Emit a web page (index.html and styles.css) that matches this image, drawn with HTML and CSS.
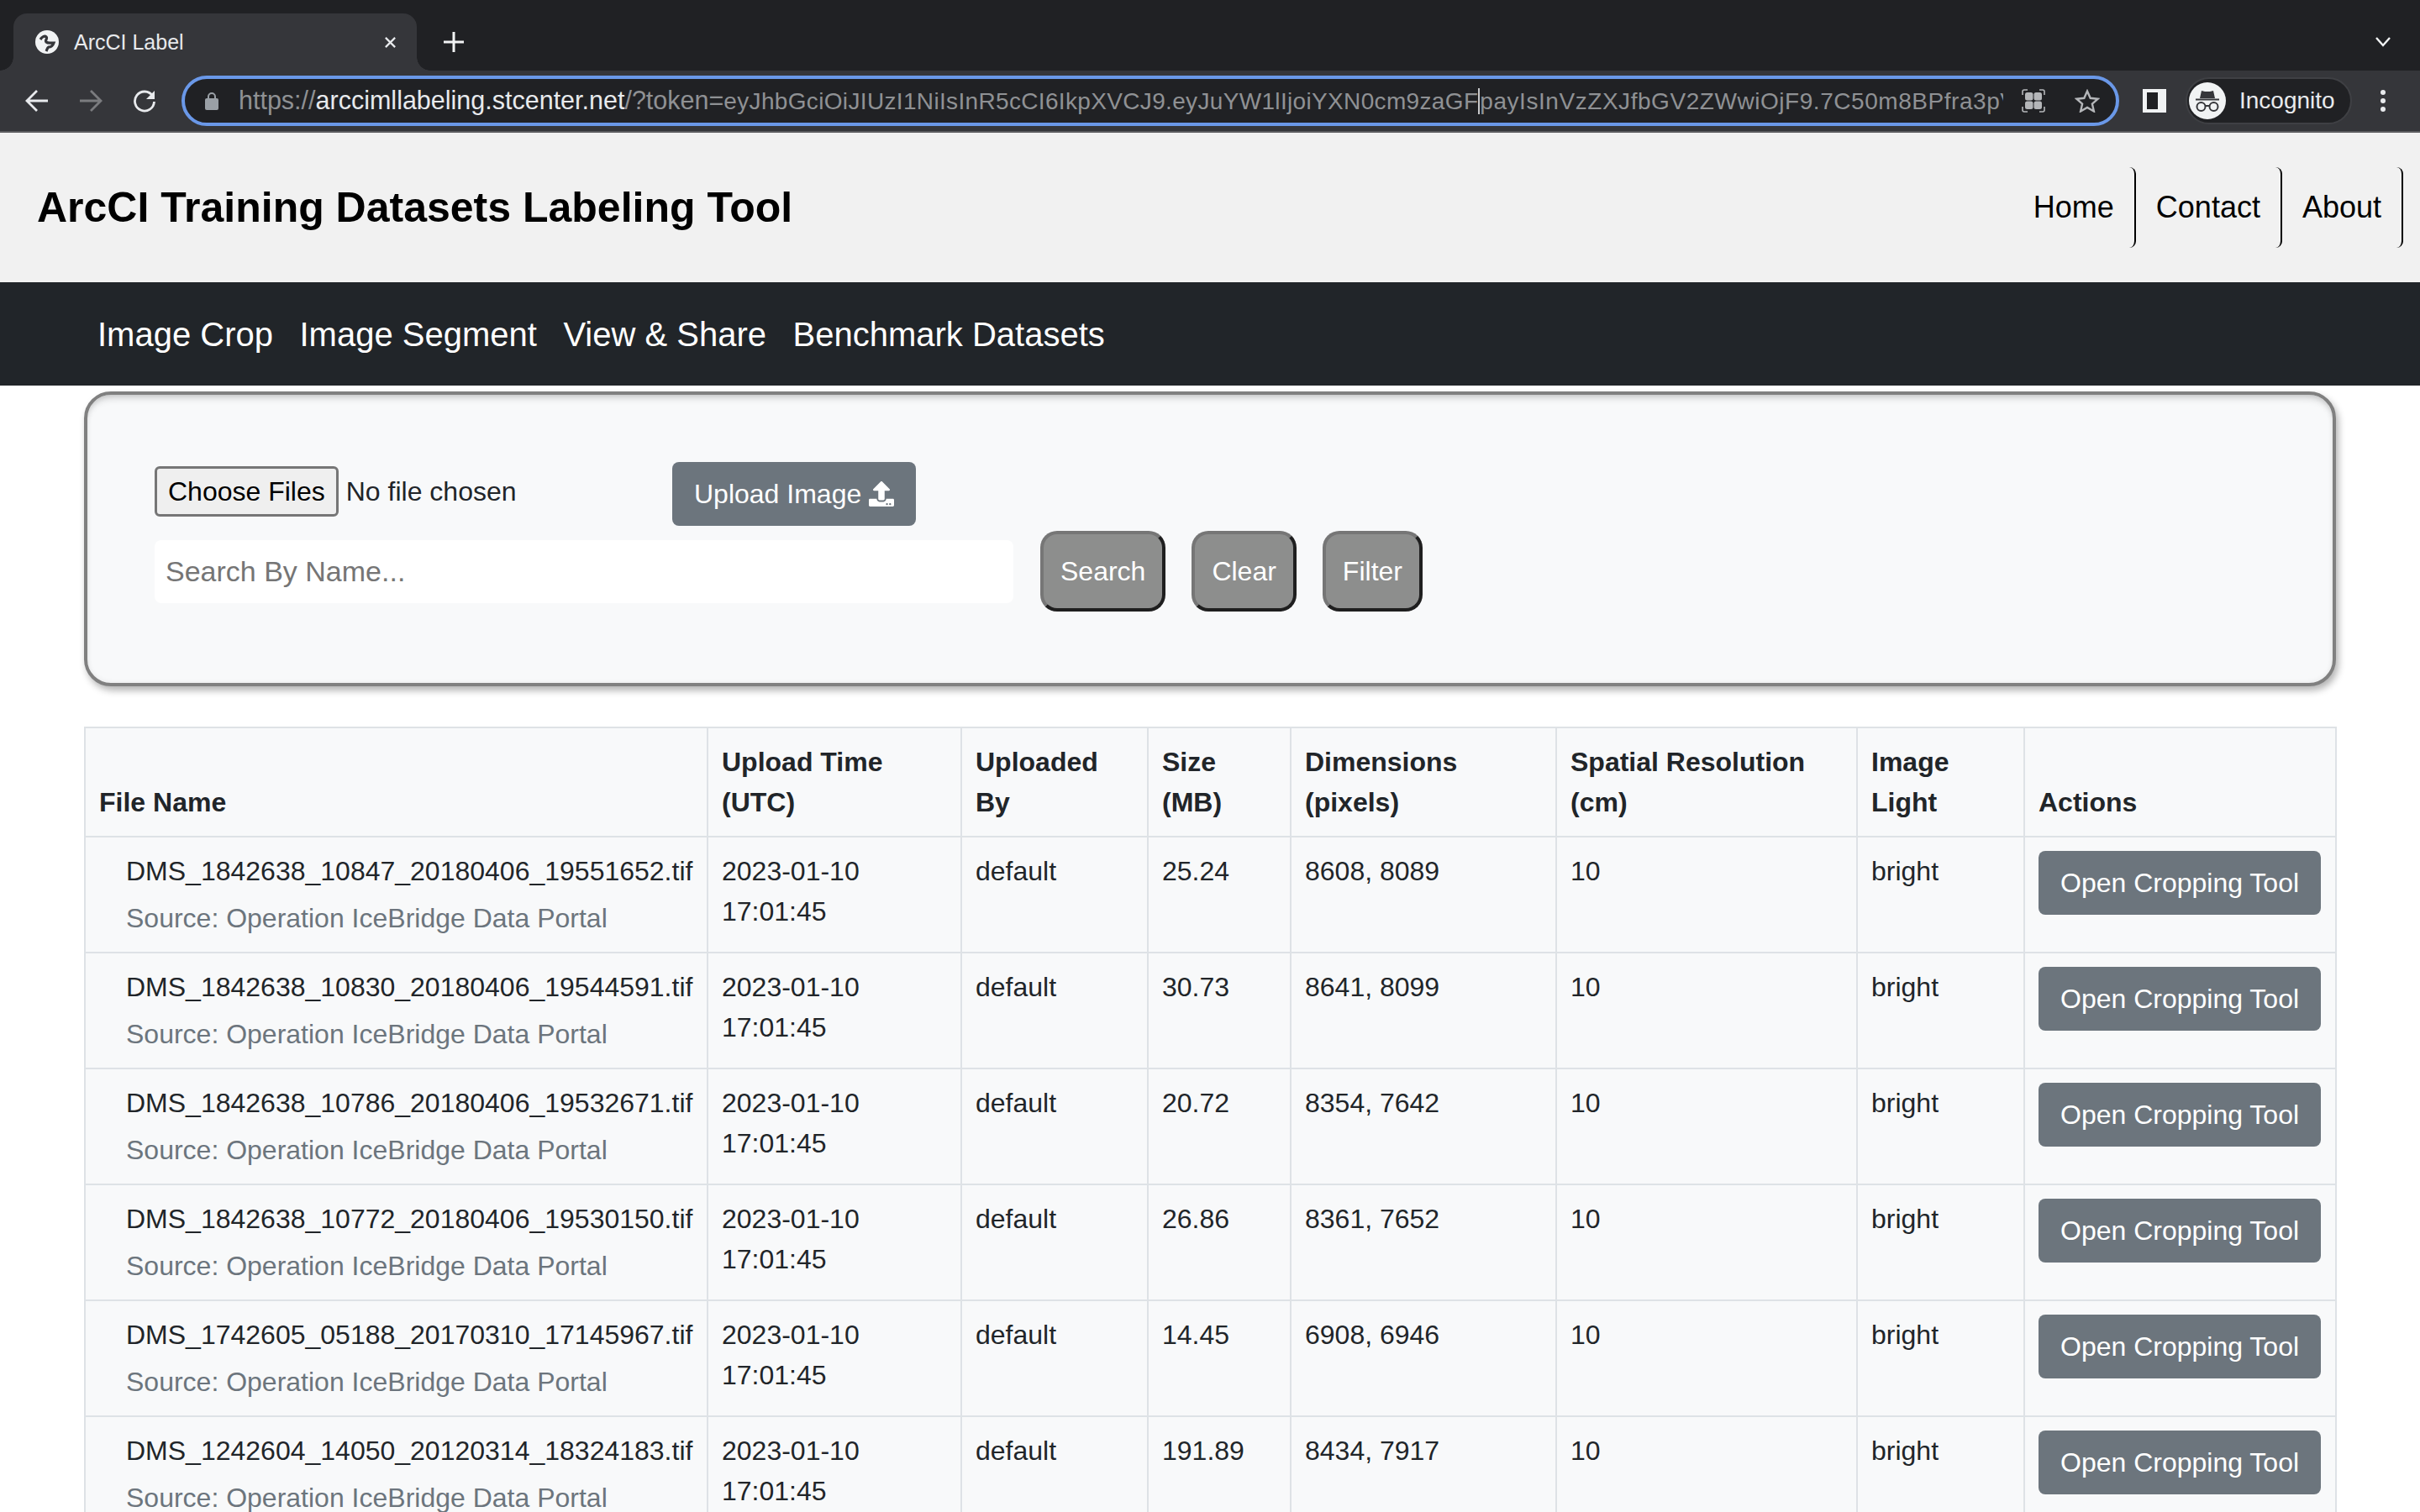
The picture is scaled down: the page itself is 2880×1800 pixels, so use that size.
FILE: index.html
```html
<!DOCTYPE html>
<html lang="en">
<head>
    <meta charset="UTF-8" />
    <title>ArcCI Label</title>
    <link rel="stylesheet" href="styles.css">
</head>
<body>
    <div class="tabstrip">
        <div class="tab">
            <svg class="favicon" viewBox="0 0 28 28">
                <circle cx="14" cy="14" r="14" fill="#f1f3f4"/>
                <path d="M6 11c2-3 5-5 7-3 2 2-2 4 0 6 2 2 5 1 9 1-1 3-3 5-6 5-2 1-2 3-3 5" fill="none" stroke="#35363a" stroke-width="3.200"/>
            </svg>
            <span class="tab-title">ArcCI Label</span>
            <svg class="tab-close" viewBox="0 0 16 16"><path d="M2 2l12 12M14 2L2 14" stroke="#e8eaed" stroke-width="2.400"/></svg>
        </div>
        <svg class="new-tab" viewBox="0 0 24 24"><path d="M12 0v24M0 12h24" stroke="#f1f3f4" stroke-width="3"/></svg>
        <svg class="tab-list" viewBox="0 0 18 12"><path d="M1 1l8 9 8-9" fill="none" stroke="#f1f3f4" stroke-width="2.400"/></svg>
    </div>

    <div class="toolbar">
        <svg class="tool-icon" viewBox="0 0 28 28"><path d="M27 14H3M14 2L2 14l12 12" fill="none" stroke="#e8eaed" stroke-width="2.800"/></svg>
        <svg class="tool-icon" viewBox="0 0 28 28"><path d="M1 14h24M14 2l12 12-12 12" fill="none" stroke="#7b7c7f" stroke-width="2.800"/></svg>
        <svg class="tool-icon" viewBox="0 0 28 28"><path d="M23.500 8A11.500 11.500 0 1 0 25.500 15" fill="none" stroke="#e8eaed" stroke-width="2.800"/><path d="M26 2v10H16z" fill="#e8eaed"/></svg>
        <div class="omnibox">
            <svg class="lock" viewBox="0 0 16 22"><path d="M4 9V6a4 4 0 0 1 8 0v3" fill="none" stroke="#9aa0a6" stroke-width="2"/><rect y="8" width="16" height="14" rx="2" fill="#9aa0a6"/></svg>
            <div class="url"><span class="url-head"><span class="dim">https://</span>arccimllabeling.stcenter.net<span class="dim">/?token=</span></span><span class="dim token">eyJhbGciOiJIUzI1NiIsInR5cCI6IkpXVCJ9.eyJuYW1lIjoiYXN0cm9zaGF</span><span class="dim caret">payIsInVzZXJfbGV2ZWwiOjF9.7C50m8BPfra3pV</span></div>
            <svg class="qr" viewBox="0 0 28 28">
                <path d="M1 7V3a2 2 0 0 1 2-2h4M21 1h4a2 2 0 0 1 2 2v4M27 21v4a2 2 0 0 1-2 2h-4M7 27H3a2 2 0 0 1-2-2v-4" fill="none" stroke="#b4b6b9" stroke-width="1.600"/>
                <rect x="4" y="4" width="9.500" height="9.500" rx="2.500" fill="#b4b6b9"/><rect x="14.500" y="4" width="9.500" height="9.500" rx="2.500" fill="#b4b6b9"/>
                <rect x="4" y="14.500" width="9.500" height="9.500" rx="2.500" fill="#b4b6b9"/><rect x="14.500" y="14.500" width="9.500" height="9.500" rx="2.500" fill="#b4b6b9"/>
            </svg>
            <svg class="star" viewBox="0 0 30 28"><path d="M15 2.500l3.700 8.300 9 .9-6.800 6 2 8.800L15 22l-7.900 4.500 2-8.800-6.800-6 9-.9z" fill="none" stroke="#b4b6b9" stroke-width="2.400"/></svg>
        </div>
        <svg class="side-panel" viewBox="0 0 28 28"><path d="M0 0h28v28H0z" fill="#f1f3f4"/><path d="M5 4h13v20H5z" fill="#202124"/></svg>
        <div class="profile">
            <svg class="avatar" viewBox="0 0 44 44">
                <circle cx="22" cy="22" r="22" fill="#f1f3f4"/>
                <path d="M13 19l2-9 4 1h6l4-1 2 9z" fill="#35363a"/>
                <path d="M8 20.500h28" stroke="#35363a" stroke-width="2"/>
                <circle cx="14.500" cy="29" r="5" fill="none" stroke="#35363a" stroke-width="2"/>
                <circle cx="29.500" cy="29" r="5" fill="none" stroke="#35363a" stroke-width="2"/>
                <path d="M19.500 28h5" stroke="#35363a" stroke-width="2"/>
            </svg>
            <span class="profile-name">Incognito</span>
        </div>
        <svg class="kebab" viewBox="0 0 6 26"><circle cx="3" cy="3" r="3" fill="#e8eaed"/><circle cx="3" cy="13" r="3" fill="#e8eaed"/><circle cx="3" cy="23" r="3" fill="#e8eaed"/></svg>
    </div>

    <div class="site-header">
        <h1 class="site-title">ArcCI Training Datasets Labeling Tool</h1>
        <div class="site-links">
            <a class="site-link">Home</a>
            <a class="site-link">Contact</a>
            <a class="site-link">About</a>
        </div>
    </div>
    <div class="main-nav">
        <a>Image Crop</a>
        <a>Image Segment</a>
        <a>View &amp; Share</a>
        <a>Benchmark Datasets</a>
    </div>

    <div class="content">
        <div class="panel">
            <div class="upload-row">
                <input class="file-input" type="file" multiple>
                <button class="btn">Upload Image
                    <svg class="upload-icon" viewBox="0 0 512 512"><path fill="#fff" d="M296 384h-80c-13.300 0-24-10.700-24-24V192h-87.700c-17.800 0-26.700-21.500-14.100-34.100L242.300 5.700c7.500-7.500 19.800-7.500 27.300 0l152.200 152.200c12.600 12.600 3.700 34.100-14.100 34.100H320v168c0 13.300-10.700 24-24 24zm216-8v112c0 13.300-10.700 24-24 24H24c-13.300 0-24-10.700-24-24V376c0-13.300 10.700-24 24-24h136v8c0 30.900 25.100 56 56 56h80c30.900 0 56-25.100 56-56v-8h136c13.300 0 24 10.700 24 24zm-124 88c0-11-9-20-20-20s-20 9-20 20 9 20 20 20 20-9 20-20zm64 0c0-11-9-20-20-20s-20 9-20 20 9 20 20 20 20-9 20-20z"/></svg>
                </button>
            </div>
            <div class="search-row">
                <input class="search-input" type="text" placeholder="Search By Name...">
                <button class="btn-old">Search</button>
                <button class="btn-old">Clear</button>
                <button class="btn-old">Filter</button>
            </div>
        </div>

        <table class="files">
            <colgroup>
                <col class="col-name"><col class="col-time"><col class="col-by"><col class="col-size">
                <col class="col-dim"><col class="col-res"><col class="col-light"><col class="col-act">
            </colgroup>
            <thead>
                <tr>
                    <th>File Name</th><th>Upload Time (UTC)</th><th>Uploaded By</th><th>Size (MB)</th>
                    <th>Dimensions (pixels)</th><th>Spatial Resolution (cm)</th><th>Image Light</th><th>Actions</th>
                </tr>
            </thead>
            <tbody>
                <tr>
                    <td class="name-cell"><p class="file-name">DMS_1842638_10847_20180406_19551652.tif</p><p class="source">Source: Operation IceBridge Data Portal</p></td>
                    <td>2023-01-10 17:01:45</td><td>default</td><td>25.24</td><td>8608, 8089</td><td>10</td><td>bright</td><td><button class="btn">Open Cropping Tool</button></td>
                </tr>
                <tr>
                    <td class="name-cell"><p class="file-name">DMS_1842638_10830_20180406_19544591.tif</p><p class="source">Source: Operation IceBridge Data Portal</p></td>
                    <td>2023-01-10 17:01:45</td><td>default</td><td>30.73</td><td>8641, 8099</td><td>10</td><td>bright</td><td><button class="btn">Open Cropping Tool</button></td>
                </tr>
                <tr>
                    <td class="name-cell"><p class="file-name">DMS_1842638_10786_20180406_19532671.tif</p><p class="source">Source: Operation IceBridge Data Portal</p></td>
                    <td>2023-01-10 17:01:45</td><td>default</td><td>20.72</td><td>8354, 7642</td><td>10</td><td>bright</td><td><button class="btn">Open Cropping Tool</button></td>
                </tr>
                <tr>
                    <td class="name-cell"><p class="file-name">DMS_1842638_10772_20180406_19530150.tif</p><p class="source">Source: Operation IceBridge Data Portal</p></td>
                    <td>2023-01-10 17:01:45</td><td>default</td><td>26.86</td><td>8361, 7652</td><td>10</td><td>bright</td><td><button class="btn">Open Cropping Tool</button></td>
                </tr>
                <tr>
                    <td class="name-cell"><p class="file-name">DMS_1742605_05188_20170310_17145967.tif</p><p class="source">Source: Operation IceBridge Data Portal</p></td>
                    <td>2023-01-10 17:01:45</td><td>default</td><td>14.45</td><td>6908, 6946</td><td>10</td><td>bright</td><td><button class="btn">Open Cropping Tool</button></td>
                </tr>
                <tr>
                    <td class="name-cell"><p class="file-name">DMS_1242604_14050_20120314_18324183.tif</p><p class="source">Source: Operation IceBridge Data Portal</p></td>
                    <td>2023-01-10 17:01:45</td><td>default</td><td>191.89</td><td>8434, 7917</td><td>10</td><td>bright</td><td><button class="btn">Open Cropping Tool</button></td>
                </tr>
            </tbody>
        </table>
    </div>
</body>
</html>
```

FILE: styles.css
```css
html, body {
    height: 1800px;
    overflow: hidden;
}
body {
    margin: 0;
    background: #fff;
    color: #212529;
    font-family: "Liberation Sans", Arial, sans-serif;
    font-size: 32px;
    line-height: 48px;
}

/* browser chrome */
.tabstrip {
    display: flex;
    align-items: flex-end;
    height: 84px;
    padding-left: 16px;
    background: #202124;
}
.tab {
    position: relative;
    display: flex;
    align-items: center;
    width: 480px;
    height: 68px;
    padding: 0 24px 0 26px;
    box-sizing: border-box;
    background: #35363a;
    border-radius: 16px 16px 0 0;
}
.tab::before, .tab::after {
    content: "";
    position: absolute;
    bottom: 0;
    width: 16px;
    height: 16px;
}
.tab::before {
    left: -16px;
    background: radial-gradient(circle at 0 0, #202124 15.500px, #35363a 16px);
}
.tab::after {
    right: -16px;
    background: radial-gradient(circle at 100% 0, #202124 15.500px, #35363a 16px);
}
.favicon {
    width: 28px;
    height: 28px;
    margin-right: 18px;
}
.tab-title {
    flex: 1;
    color: #e8eaed;
    font-size: 25px;
}
.tab-close {
    width: 15px;
    height: 15px;
}
.new-tab {
    width: 24px;
    height: 24px;
    margin: 0 0 22px 32px;
}
.tab-list {
    width: 18px;
    height: 12px;
    margin: 0 35px 28px auto;
}
.toolbar {
    display: flex;
    align-items: center;
    height: 72px;
    padding-left: 30px;
    background: #35363a;
    border-bottom: 2px solid #5b5c5f;
}
.tool-icon {
    width: 28px;
    height: 28px;
    margin-right: 36px;
}
.tool-icon:nth-child(3) {
    margin-right: 30px;
}
.omnibox {
    display: flex;
    align-items: center;
    width: 2306px;
    height: 60px;
    box-sizing: border-box;
    padding-left: 24px;
    background: #202124;
    border: 4px solid #6a98e8;
    border-radius: 30px;
}
.lock {
    width: 16px;
    height: 22px;
    margin-right: 24px;
    flex: none;
}
.url {
    width: 2100px;
    flex: none;
    overflow: hidden;
    white-space: nowrap;
    color: #e8eaed;
    font-size: 28px;
    line-height: 40px;
}
.url-head {
    font-size: 30.500px;
}
.dim {
    color: #8f9194;
}
.token {
    letter-spacing: .34px;
}
.caret {
    letter-spacing: .55px;
    border-left: 2px solid #c8c9cb;
}
.qr {
    width: 28px;
    height: 28px;
    margin-left: 22px;
    flex: none;
}
.star {
    width: 30px;
    height: 28px;
    margin-left: 35px;
    flex: none;
}
.side-panel {
    width: 28px;
    height: 28px;
    margin-left: 28px;
}
.profile {
    display: flex;
    align-items: center;
    width: 198px;
    height: 56px;
    margin-left: 23px;
    padding-left: 2px;
    box-sizing: border-box;
    background: #202124;
    border: 2px solid #3f4044;
    border-radius: 28px;
}
.avatar {
    width: 44px;
    height: 44px;
}
.profile-name {
    margin-left: 16px;
    color: #e8eaed;
    font-size: 28px;
}
.kebab {
    width: 6px;
    height: 26px;
    margin-left: 34px;
}

/* site header */
.site-header {
    display: flex;
    align-items: center;
    justify-content: space-between;
    height: 178px;
    padding: 0 20px 0 44px;
    background: #f1f1f1;
}
.site-title {
    margin: 0;
    color: #000;
    font-size: 50px;
    line-height: 60px;
    font-weight: bold;
}
.site-links {
    display: flex;
}
.site-link {
    padding: 21px 24px;
    color: #000;
    font-size: 36px;
    line-height: 54px;
    border-right: 2px solid #000;
    border-radius: 8px;
}
.main-nav {
    display: flex;
    gap: 31.500px;
    height: 123px;
    padding-left: 116px;
    align-items: center;
    background: #212529;
    color: #fff;
    font-size: 40px;
}

/* page content */
.content {
    padding: 7px 100px 0;
}
.panel {
    height: 351px;
    box-sizing: border-box;
    padding: 80px 79px 0 80px;
    background: #f8f9fa;
    border: 4px solid #808080;
    border-radius: 32px;
    box-shadow: 3px 5px 8px rgba(0, 0, 0, .3), inset 0 8px 10px -5px rgba(0, 0, 0, .2), inset 0 0 6px rgba(0, 0, 0, .08);
}
.upload-row {
    display: flex;
    align-items: flex-start;
}
.file-input {
    width: 616px;
    margin-top: 5px;
    font-family: inherit;
    font-size: 32px;
    color: #212529;
}
.file-input::file-selector-button {
    height: 60px;
    margin-right: 9px;
    padding: 0 13px;
    font-family: inherit;
    font-size: 32px;
    background: #efefef;
    color: #000;
    border: 3px solid #767676;
    border-radius: 6px;
}
.btn {
    display: inline-flex;
    align-items: center;
    padding: 14px 26px;
    font-family: inherit;
    font-size: 32px;
    line-height: 48px;
    color: #fff;
    background: #6c757d;
    border: 0;
    border-radius: 8px;
}
.upload-icon {
    width: 30px;
    height: 30px;
    margin-left: 9px;
}
.search-row {
    display: flex;
    align-items: center;
    gap: 31px;
    margin-top: 6px;
}
.search-input {
    width: 1022px;
    height: 75px;
    margin-right: 1px;
    box-sizing: border-box;
    padding: 0 13px;
    font-family: inherit;
    font-size: 34px;
    background: #fff;
    border: 0;
    border-radius: 8px;
}
.search-input::placeholder {
    color: #757575;
}
.btn-old {
    height: 96px;
    padding: 0 20px;
    font-family: inherit;
    font-size: 32px;
    color: #fff;
    background: #8d8e8d;
    border: 4px solid;
    border-color: #767676 #1f1f1f #1f1f1f #767676;
    border-radius: 20px;
}

/* table */
.files {
    width: 2679px;
    margin-top: 48px;
    table-layout: fixed;
    border-collapse: collapse;
    background: #f8f9fa;
}
.col-name { width: 741px; }
.col-time { width: 302px; }
.col-by { width: 222px; }
.col-size { width: 170px; }
.col-dim { width: 316px; }
.col-res { width: 358px; }
.col-light { width: 199px; }
.col-act { width: 371px; }
.files th, .files td {
    padding: 16px;
    border: 2px solid #dee2e6;
    vertical-align: top;
    text-align: left;
}
.files th {
    vertical-align: bottom;
}
.files td.name-cell {
    padding-left: 48px;
    padding-right: 0;
}
.file-name {
    margin: 0 0 8px;
    white-space: nowrap;
}
.source {
    margin: 0;
    color: #6c757d;
    white-space: nowrap;
}
```
